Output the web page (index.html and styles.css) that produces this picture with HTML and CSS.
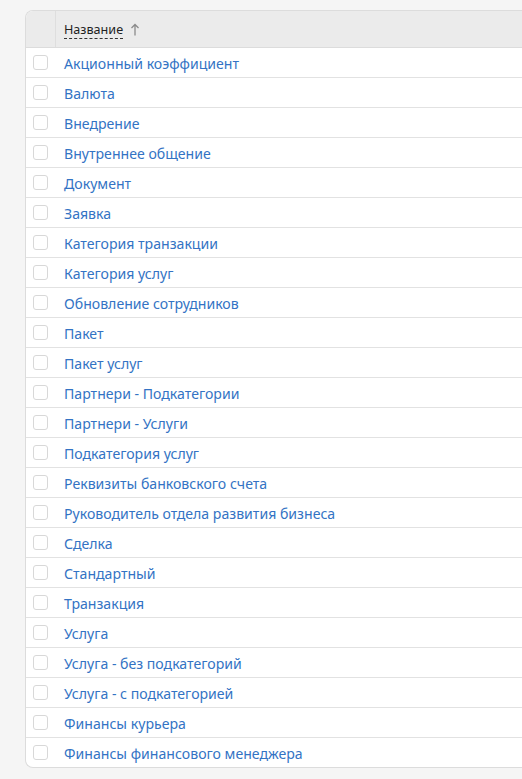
FILE: index.html
```html
<!DOCTYPE html>
<html lang="ru">
<head>
<meta charset="utf-8">
<link rel="stylesheet" href="styles.css">
</head>
<body>
<div class="card">
  <div class="row head">
    <div class="cell check"></div>
    <div class="cell name"><span class="title">Название</span><svg class="arrow" width="10" height="13" viewBox="0 0 10 13"><path d="M5 12.5V1.5M1.5 5L5 1.5 8.5 5" fill="none" stroke="#8a8a8a" stroke-width="1.3"/></svg></div>
  </div>
  <div class="row"><div class="cell check"><span class="box"></span></div><div class="cell name"><a>Акционный коэффициент</a></div></div>
  <div class="row"><div class="cell check"><span class="box"></span></div><div class="cell name"><a>Валюта</a></div></div>
  <div class="row"><div class="cell check"><span class="box"></span></div><div class="cell name"><a>Внедрение</a></div></div>
  <div class="row"><div class="cell check"><span class="box"></span></div><div class="cell name"><a>Внутреннее общение</a></div></div>
  <div class="row"><div class="cell check"><span class="box"></span></div><div class="cell name"><a>Документ</a></div></div>
  <div class="row"><div class="cell check"><span class="box"></span></div><div class="cell name"><a>Заявка</a></div></div>
  <div class="row"><div class="cell check"><span class="box"></span></div><div class="cell name"><a>Категория транзакции</a></div></div>
  <div class="row"><div class="cell check"><span class="box"></span></div><div class="cell name"><a>Категория услуг</a></div></div>
  <div class="row"><div class="cell check"><span class="box"></span></div><div class="cell name"><a>Обновление сотрудников</a></div></div>
  <div class="row"><div class="cell check"><span class="box"></span></div><div class="cell name"><a>Пакет</a></div></div>
  <div class="row"><div class="cell check"><span class="box"></span></div><div class="cell name"><a>Пакет услуг</a></div></div>
  <div class="row"><div class="cell check"><span class="box"></span></div><div class="cell name"><a>Партнери - Подкатегории</a></div></div>
  <div class="row"><div class="cell check"><span class="box"></span></div><div class="cell name"><a>Партнери - Услуги</a></div></div>
  <div class="row"><div class="cell check"><span class="box"></span></div><div class="cell name"><a>Подкатегория услуг</a></div></div>
  <div class="row"><div class="cell check"><span class="box"></span></div><div class="cell name"><a>Реквизиты банковского счета</a></div></div>
  <div class="row"><div class="cell check"><span class="box"></span></div><div class="cell name"><a>Руководитель отдела развития бизнеса</a></div></div>
  <div class="row"><div class="cell check"><span class="box"></span></div><div class="cell name"><a>Сделка</a></div></div>
  <div class="row"><div class="cell check"><span class="box"></span></div><div class="cell name"><a>Стандартный</a></div></div>
  <div class="row"><div class="cell check"><span class="box"></span></div><div class="cell name"><a>Транзакция</a></div></div>
  <div class="row"><div class="cell check"><span class="box"></span></div><div class="cell name"><a>Услуга</a></div></div>
  <div class="row"><div class="cell check"><span class="box"></span></div><div class="cell name"><a>Услуга - без подкатегорий</a></div></div>
  <div class="row"><div class="cell check"><span class="box"></span></div><div class="cell name"><a>Услуга - с подкатегорией</a></div></div>
  <div class="row"><div class="cell check"><span class="box"></span></div><div class="cell name"><a>Финансы курьера</a></div></div>
  <div class="row"><div class="cell check"><span class="box"></span></div><div class="cell name"><a>Финансы финансового менеджера</a></div></div>
</div>
</body>
</html>
```
FILE: styles.css
```css
html, body {
  margin: 0;
  height: 100%;
  overflow: hidden;
}
body {
  background: #f5f5f5;
  font-family: "Noto Sans", "Open Sans", sans-serif;
  font-size: 14.1px;
  padding: 10px 0 0 25px;
  box-sizing: border-box;
}
.card {
  background: #fff;
  border: 1px solid #dcdcdc;
  border-right: none;
  border-radius: 8px 0 0 8px;
  overflow: hidden;
}
.row {
  display: flex;
  height: 29px;
  border-bottom: 1px solid #e2e2e2;
}
.row:last-child {
  border-bottom: none;
}
.row.head {
  height: 36px;
  background: #ebebeb;
  border-bottom: 1px solid #dcdcdc;
}
.cell {
  display: flex;
  align-items: center;
}
.row .cell.name {
  padding-top: 2px;
  box-sizing: border-box;
}
.check {
  width: 30px;
  box-sizing: border-box;
  padding-left: 7px;
}
.head .check {
  border-right: 1px solid #dedede;
}
.name {
  padding-left: 8px;
  flex: 1;
}
.box {
  width: 13px;
  height: 13px;
  border: 1px solid #d8d8d8;
  border-radius: 3px;
  background: #fff;
}
.name a {
  color: #3373c4;
}
.head .cell.name {
  padding-top: 3px;
}
.title {
  color: #1f1f1f;
  font-size: 12.6px;
  border-bottom: 1px dashed #333;
  line-height: 16px;
}
.arrow {
  margin-left: 7px;
  margin-bottom: 2px;
}
```
